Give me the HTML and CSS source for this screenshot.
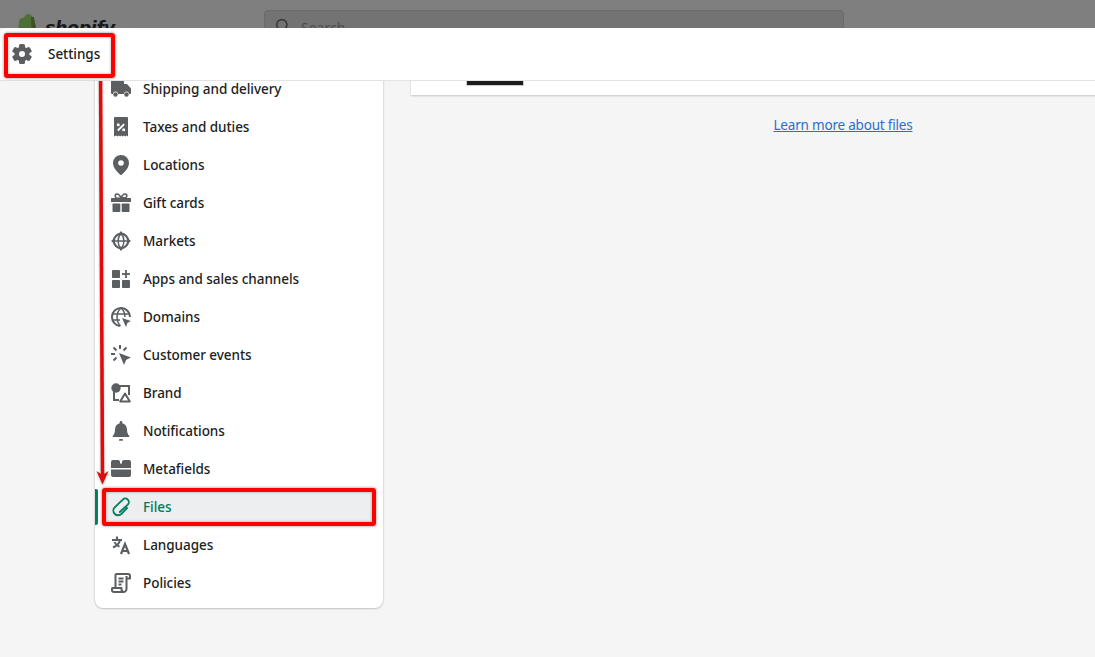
FILE: index.html
```html
<!DOCTYPE html>
<html lang="en">
<head>
<meta charset="utf-8">
<title>Settings - Files</title>
<link rel="stylesheet" href="styles.css">
</head>
<body>
<div class="topbar">
  <div class="brand">
    <svg class="bag" viewBox="0 0 21 24"><path fill="#4f6f36" d="M2.500 5 7 3.500C8 1 10 0 11.500 0S14 1 15 2.500L17 3l4 20-14 1H0z"/><path fill="#3b5326" d="M16.500 3l4.500 20-6 1-1-21z"/></svg>
    <span class="wordmark">shopify</span>
  </div>
  <div class="search">
    <svg class="search-icon" viewBox="0 0 20 20"><circle cx="8" cy="8" r="6" fill="none" stroke="#3d3d3d" stroke-width="2"/><path stroke="#3d3d3d" stroke-width="2" d="m12.500 12.500 5 5"/></svg>
    <span class="search-text">Search</span>
  </div>
</div>

<header class="settings-head">
  <svg class="icon" viewBox="0 0 20 20"><g fill="#5c5f62"><circle cx="10" cy="10" r="7.500"/><rect x="7" y="0" width="6" height="20" rx="1.500"/><rect x="7" y="0" width="6" height="20" rx="1.500" transform="rotate(60 10 10)"/><rect x="7" y="0" width="6" height="20" rx="1.500" transform="rotate(120 10 10)"/></g><circle cx="10" cy="10" r="3" fill="#fff"/></svg>
  <span class="label">Settings</span>
  <div class="annot annot-settings"></div>
</header>

<div class="content">
  <nav class="sidebar">
    <a class="nav-item"><svg class="icon" viewBox="0 0 20 20"><path fill="#5c5f62" d="M0 2.500A1.500 1.500 0 0 1 1.500 1h10A1.500 1.500 0 0 1 13 2.500V5h3l4 4.500V14a1 1 0 0 1-1 1h-1a2.500 2.500 0 0 0-5 0H7a2.500 2.500 0 0 0-5 0H1a1 1 0 0 1-1-1z"/><circle cx="4.500" cy="15.500" r="2.200" fill="#5c5f62"/><circle cx="15.500" cy="15.500" r="2.200" fill="#5c5f62"/></svg><span class="label">Shipping and delivery</span></a>
    <a class="nav-item"><svg class="icon" viewBox="0 0 20 20"><path fill="#5c5f62" d="M4 0h12a1 1 0 0 1 1 1v18.500l-1.200-1-1.400 1-1.400-1-1.300 1-1.200-1-1.300 1-1.300-1-1.400 1-1.400-1L3 19.500V1a1 1 0 0 1 1-1z"/><path stroke="#fff" stroke-width="1.800" d="m6.800 13.500 6.400-6.400"/><circle cx="7.300" cy="7.800" r="1.500" fill="#fff"/><circle cx="12.700" cy="12.800" r="1.500" fill="#fff"/></svg><span class="label">Taxes and duties</span></a>
    <a class="nav-item"><svg class="icon" viewBox="0 0 20 20"><path fill="#5c5f62" fill-rule="evenodd" d="M10 0a8 8 0 0 0-8 8c0 5 5 9.700 7.400 11.800a.9.900 0 0 0 1.200 0C13 17.700 18 13 18 8a8 8 0 0 0-8-8zm0 5.200a2.800 2.800 0 1 1 0 5.600 2.800 2.800 0 0 1 0-5.600z"/></svg><span class="label">Locations</span></a>
    <a class="nav-item"><svg class="icon" viewBox="0 0 20 20"><g fill="#5c5f62"><rect x="0" y="5" width="20" height="4" rx=".5"/><rect x="1.500" y="10.500" width="7.800" height="8.500" rx=".8"/><rect x="10.700" y="10.500" width="7.800" height="8.500" rx=".8"/></g><path fill="none" stroke="#5c5f62" stroke-width="1.700" d="M10 5C9 2.500 7.500 1 6 1S3.800 2.500 4.500 4 8 5.500 10 5c2-.5 4.800.5 5.500-1S15.500 1 14 1s-3 1.500-4 4z"/></svg><span class="label">Gift cards</span></a>
    <a class="nav-item"><svg class="icon" viewBox="0 0 20 20"><g fill="none" stroke="#5c5f62"><circle cx="10" cy="10" r="7.200" stroke-width="2.200"/><path stroke-width="1.500" d="M2.500 10h15M10 2.500c-4 4.500-4 10.500 0 15 4-4.500 4-10.500 0-15z"/></g><path fill="#5c5f62" d="M10 0l2.500 3h-5zM10 20l-2.500-3h5zM0 10l3-2.500v5zM20 10l-3 2.500v-5z"/></svg><span class="label">Markets</span></a>
    <a class="nav-item"><svg class="icon" viewBox="0 0 20 20"><g fill="#5c5f62"><rect x="1" y="1" width="8" height="8" rx=".8"/><rect x="1" y="11" width="8" height="8" rx=".8"/><rect x="11" y="11" width="8" height="8" rx=".8"/><rect x="14.100" y="1" width="1.800" height="8"/><rect x="11" y="4.100" width="8" height="1.800"/></g></svg><span class="label">Apps and sales channels</span></a>
    <a class="nav-item"><svg class="icon" viewBox="0 0 20 20"><g fill="none" stroke="#5c5f62" stroke-width="2"><path d="M9 19a9 9 0 1 1 10-9"/><path stroke-width="1.500" d="M1 7h18M1 13h8M10 1c-3 2.500-4 5.500-4 9s1 6.500 3.500 9M10 1c3 2.500 4 5.500 4 9"/></g><path fill="#5c5f62" d="m11 11 9 3-3.500 1.800L15 20z"/></svg><span class="label">Domains</span></a>
    <a class="nav-item"><svg class="icon" viewBox="0 0 20 20"><path fill="#5c5f62" d="m8 8 12 4.500-4.800 2.200L13 20z"/><path fill="none" stroke="#5c5f62" stroke-width="2" d="M9 0v4M2.500 2.500l3 3M0 9h4M2.500 15.500l3-3M15.500 2.500l-3 3"/></svg><span class="label">Customer events</span></a>
    <a class="nav-item"><svg class="icon" viewBox="0 0 20 20"><path fill="none" stroke="#5c5f62" stroke-width="2" d="M7 3h11v9M3 8v9h5"/><path fill="none" stroke="#5c5f62" stroke-width="2" stroke-linejoin="round" d="m14 10.500-4.800 8h9.600z"/><circle cx="5" cy="5" r="4.700" fill="#5c5f62"/></svg><span class="label">Brand</span></a>
    <a class="nav-item"><svg class="icon" viewBox="0 0 20 20"><path fill="#5c5f62" d="M10 0c.8 0 1.300.6 1.300 1.300v.9C14.500 3 16 5.500 16 8.500c0 3 .8 5 2.200 6.300.4.400.2 1.200-.4 1.200H2.200c-.6 0-.8-.8-.4-1.200C3.200 13.500 4 11.500 4 8.500c0-3 1.500-5.500 4.700-6.300v-.9C8.700.6 9.200 0 10 0z"/><rect x="8" y="18" width="4" height="1.800" rx=".9" fill="#5c5f62"/></svg><span class="label">Notifications</span></a>
    <a class="nav-item"><svg class="icon" viewBox="0 0 20 20"><path fill="#5c5f62" d="M0 3a2 2 0 0 1 2-2h5a2 2 0 0 1 2 1.500V4.500h2V2.500A2 2 0 0 1 13 1h5a2 2 0 0 1 2 2v6H0zM0 10.500h20V16a2 2 0 0 1-2 2H2a2 2 0 0 1-2-2z"/></svg><span class="label">Metafields</span></a>
    <a class="nav-item is-active"><svg class="icon" viewBox="0 0 20 20"><path fill="none" stroke="#008060" stroke-width="1.900" stroke-linecap="round" d="M16 11 10.500 16.800a4.700 4.700 0 0 1-6.800-6.500L11.800 2.600a3.500 3.500 0 0 1 5 5L8.800 15"/></svg><span class="label">Files</span><div class="annot annot-files"></div></a>
    <a class="nav-item"><svg class="icon" viewBox="0 0 20 20"><g fill="none" stroke="#5c5f62" stroke-width="2"><path d="M1 5h10M6 1.500V5M9 5c-.8 3.500-3.500 6-7 7.500M3.500 7c1 2.500 3 4 5 4.800"/><path stroke-width="2.200" d="m10 19 4-10 4 10M11.500 16h5"/></g></svg><span class="label">Languages</span></a>
    <a class="nav-item"><svg class="icon" viewBox="0 0 20 20"><g fill="none" stroke="#5c5f62" stroke-width="2" stroke-linejoin="round"><path d="M4.500 14V2a1 1 0 0 1 1-1H17a2 2 0 0 1 2 2v2.500h-3.500"/><path d="M15.500 3v13a3 3 0 0 1-3 3H3a2 2 0 0 1-2-2v-1.500a.5.500 0 0 1 .5-.5h9v1.500a2 2 0 0 0 2 2"/><path d="M7.500 5.500h5M7.500 8.500h5M7.500 11.500h3"/></g></svg><span class="label">Policies</span></a>
  </nav>
  <main class="main">
    <div class="files-card"><div class="thumb"></div></div>
    <a class="learn-link">Learn more about files</a>
  </main>
  <svg class="arrow" viewBox="0 0 24 425"><path fill="none" stroke="#e00b0b" stroke-width="3.500" d="M10.500 0 12.500 405"/><path fill="#e00b0b" d="m6.500 401 6 13.500 6-13.500-6 4z"/></svg>
</div>
</body>
</html>
```

FILE: styles.css
```css
* { box-sizing: border-box; }
html, body { margin: 0; height: 100%; }
body {
  width: 1095px;
  height: 657px;
  overflow: hidden;
  background: #f5f5f5;
  font-family: "Noto Sans", "Open Sans", sans-serif;
  font-size: 13.5px;
  color: #202223;
}
.topbar {
  height: 28px;
  background: #7f7f7f;
  display: flex;
  overflow: hidden;
  padding: 10px 0 0 17px;
}
.brand { width: 247px; display: flex; gap: 7px; flex-shrink: 0; }
.bag { width: 21px; height: 24px; margin-top: 4px; }
.wordmark {
  font-family: "DejaVu Sans", sans-serif;
  font-weight: 700;
  font-style: italic;
  font-size: 17.5px;
  letter-spacing: -.4px;
  line-height: 36px;
  color: #1a1a1a;
}
.search {
  width: 580px;
  height: 34px;
  background: #737373;
  border: 1px solid #6b6b6b;
  border-radius: 4px;
  display: flex;
  align-items: flex-start;
  gap: 9px;
  padding: 7px 0 0 10px;
}
.search-icon { width: 17px; height: 17px; flex-shrink: 0; }
.search-text { font-size: 14px; color: #4d4d4d; line-height: 20px; }
.settings-head {
  position: relative;
  z-index: 2;
  height: 53px;
  background: #fff;
  border-bottom: 1px solid #e1e3e5;
  border-top-left-radius: 8px;
  display: flex;
  align-items: center;
  gap: 16px;
  padding-left: 12px;
}
.icon { width: 20px; height: 20px; flex-shrink: 0; }
.label {
  font-weight: 500;
  letter-spacing: -.05px;
}
.annot {
  position: absolute;
  border: 4px solid #f00;
  border-radius: 3px;
  box-shadow: 0 0 3px rgba(0, 0, 0, .5), inset 0 0 3px rgba(0, 0, 0, .35);
  pointer-events: none;
}
.annot-settings { left: 4px; top: 5px; width: 111px; height: 45px; }
.annot-files { left: 7px; top: 0; width: 274px; height: 38px; z-index: 1; }
.content {
  position: relative;
  display: flex;
  align-items: flex-start;
  gap: 28px;
  margin-top: -11px;
  padding-left: 95px;
}
.sidebar {
  width: 288px;
  flex-shrink: 0;
  background: #fff;
  border-radius: 0 0 8px 8px;
  box-shadow: 0 0 2px rgba(0, 0, 0, .2), 0 1px 2px rgba(0, 0, 0, .15);
  padding-bottom: 6px;
}
.nav-item {
  position: relative;
  height: 38px;
  display: flex;
  align-items: center;
  gap: 12px;
  padding-left: 16px;
  color: #202223;
}
.is-active { color: #007a5a; }
.is-active::before {
  content: "";
  position: absolute;
  left: 0;
  top: 1px;
  width: 3px;
  height: 36px;
  background: #008060;
  border-radius: 0 2px 2px 0;
}
.is-active::after {
  content: "";
  position: absolute;
  left: 8px;
  right: 8px;
  top: 0;
  bottom: 0;
  background: #edeeef;
  z-index: 0;
}
.is-active svg, .is-active .label { position: relative; z-index: 1; }
.main {
  width: 864px;
  flex-shrink: 0;
  display: flex;
  flex-direction: column;
  align-items: center;
}
.files-card {
  align-self: stretch;
  height: 25px;
  background: #fff;
  box-shadow: 0 1px 2px rgba(0, 0, 0, .2);
  padding-left: 55px;
}
.thumb {
  width: 58px;
  height: 16px;
  background: #1c1c1c;
  border: 1px solid #c9cccf;
  border-top: 0;
  border-radius: 0 0 2px 2px;
}
.learn-link {
  margin-top: 20px;
  color: #2c6ecb;
  text-decoration: underline;
  letter-spacing: -.2px;
  line-height: 20px;
}
.arrow {
  position: absolute;
  left: 90px;
  top: 0;
  width: 24px;
  height: 425px;
  z-index: 1;
  filter: drop-shadow(0 1px 1px rgba(0, 0, 0, .3));
}
```
